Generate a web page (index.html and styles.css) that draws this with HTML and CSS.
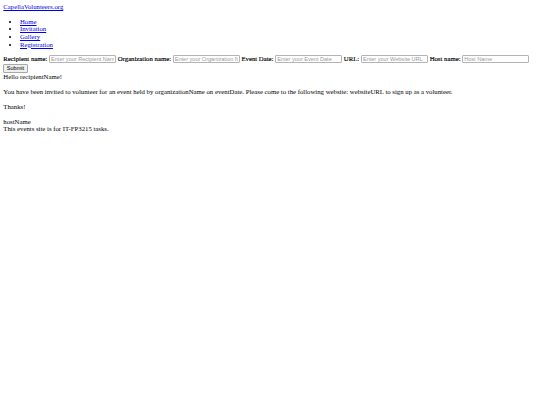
FILE: index.html
```html
<!DOCTYPE html>
<html lang="en">
<head>
<meta charset="utf-8">
<title>CapellaVolunteers.org</title>
<link rel="stylesheet" href="styles.css">
</head>
<body>
<header class="site-header">
  <a href="#" class="brand">CapellaVolunteers.org</a>
  <nav>
    <ul class="nav-list">
      <li><a href="#">Home</a></li>
      <li><a href="#">Invitation</a></li>
      <li><a href="#">Gallery</a></li>
      <li><a href="#">Registration</a></li>
    </ul>
  </nav>
</header>
<main>
  <form class="invite-form">
    <label class="field-label" for="recipientName">Recipient name:</label>
    <input class="field" type="text" id="recipientName" placeholder="Enter your Recipient Name">
    <label class="field-label" for="organizationName">Organization name:</label>
    <input class="field" type="text" id="organizationName" placeholder="Enter your Organization Name">
    <label class="field-label" for="eventDate">Event Date:</label>
    <input class="field" type="text" id="eventDate" placeholder="Enter your Event Date">
    <label class="field-label" for="websiteURL">URL:</label>
    <input class="field" type="text" id="websiteURL" placeholder="Enter your Website URL">
    <label class="field-label" for="hostName">Host name:</label>
    <input class="field" type="text" id="hostName" placeholder="Host Name">
    <button class="submit-btn" type="button">Submit</button>
  </form>
  <div class="letter">
    <div>Hello recipientName!</div>
    <p class="letter-p">You have been invited to volunteer for an event held by organizationName on eventDate. Please come to the following website: websiteURL to sign up as a volunteer.</p>
    <p class="letter-p">Thanks!</p>
    <p class="letter-p">hostName</p>
  </div>
</main>
<footer class="site-footer">This events site is for IT-FP3215 tasks.</footer>
</body>
</html>
```

FILE: styles.css
```css
html {
  background: #ffffff;
}

body {
  margin: 3.33px;
  font-family: "Liberation Serif", "Times New Roman", serif;
  font-size: 6.76px;
  line-height: 7.67px;
  color: #000000;
}

a {
  color: #0000ee;
  text-decoration: underline;
}

.nav-list {
  margin: 6.667px 0;
  padding-left: 16.667px;
  list-style: disc;
}

.invite-form {
  margin: 0;
}

.field-label {
  color: #000000;
  -webkit-text-stroke: 0.15px #000000;
}

.field {
  box-sizing: border-box;
  width: 67px;
  height: 8px;
  padding: 0 1px;
  margin: 0;
  border: 1px solid #b4b4b4;
  border-radius: 1px;
  font-family: "Liberation Sans", Arial, sans-serif;
  font-size: 5.56px;
  vertical-align: middle;
}

.field::placeholder {
  color: #9a9a9a;
}

.submit-btn {
  box-sizing: border-box;
  height: 9px;
  padding: 0 2.5px;
  margin: 0.5px 0 0;
  border: 1px solid #a8a8a8;
  border-radius: 1px;
  background: #efefef;
  font-family: "Liberation Sans", Arial, sans-serif;
  font-size: 5.56px;
  line-height: 1;
  color: #000000;
  vertical-align: top;
}

.letter-p {
  margin: 7.2px 0;
}

.letter-p:last-child {
  margin-bottom: 0;
}
```
